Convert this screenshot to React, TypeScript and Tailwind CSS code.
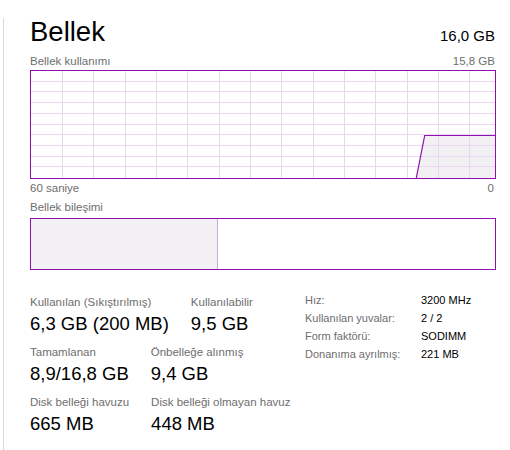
import React from "react";

const purple = "#8b12ae";

const stats = [
  [
    { label: "Kullanılan (Sıkıştırılmış)", value: "6,3 GB (200 MB)" },
    { label: "Kullanılabilir", value: "9,5 GB" },
  ],
  [
    { label: "Tamamlanan", value: "8,9/16,8 GB" },
    { label: "Önbelleğe alınmış", value: "9,4 GB" },
  ],
  [
    { label: "Disk belleği havuzu", value: "665 MB" },
    { label: "Disk belleği olmayan havuz", value: "448 MB" },
  ],
];

const specs = [
  ["Hız:", "3200 MHz"],
  ["Kullanılan yuvalar:", "2 / 2"],
  ["Form faktörü:", "SODIMM"],
  ["Donanıma ayrılmış:", "221 MB"],
];

function UsageGraph() {
  const w = 464;
  const h = 107;
  const cols = Array.from({ length: 14 }, (_, i) => Math.round(31 + i * 31.33) + 0.5);
  const rows = Array.from({ length: 9 }, (_, i) => Math.round((i + 1) * 10.7) - 0.5);
  return (
    <svg width={w} height={h} className="block">
      <polygon points={`385.3,${h} 393.7,64.5 ${w},64.5 ${w},${h}`} fill="#f3f0f4" />
      {cols.map((x) => (
        <line key={x} x1={x} y1={0} x2={x} y2={h} stroke="#e9d6f1" strokeWidth={1} shapeRendering="crispEdges" />
      ))}
      {rows.map((y) => (
        <line key={y} x1={0} y1={y} x2={w} y2={y} stroke="#e9d6f1" strokeWidth={1} shapeRendering="crispEdges" />
      ))}
      <polyline points={`385.3,${h} 393.7,64.5 ${w},64.5`} fill="none" stroke={purple} strokeWidth={1.2} />
    </svg>
  );
}

export default function App() {
  return (
    <div className="w-[510px] h-[450px] bg-white overflow-hidden text-black" style={{ fontFamily: '"Liberation Sans", Arial, sans-serif' }}>
      <div className="ml-[3px] mt-[18px] h-[432px] border-l border-[#dadada] pl-[26px]">
        <div className="w-[466px] flex items-baseline justify-between">
          <div className="text-[27.5px] leading-[28px]">Bellek</div>
          <div className="text-[15px] leading-[20px] pr-[1px]">16,0 GB</div>
        </div>

        <div className="w-[466px] mt-[8px] flex justify-between text-[11.5px] leading-[14px] text-[#6e6e6e]">
          <span>Bellek kullanımı</span>
          <span className="pr-[1px]">15,8 GB</span>
        </div>
        <div className="mt-[2px] w-[466px] h-[109px] border border-[#8b12ae]">
          <UsageGraph />
        </div>
        <div className="w-[466px] mt-[2px] flex justify-between text-[11.5px] leading-[14px] text-[#6e6e6e]">
          <span>60 saniye</span>
          <span className="pr-[2px]">0</span>
        </div>

        <div className="mt-[5px] text-[11.5px] leading-[14px] text-[#6e6e6e]">Bellek bileşimi</div>
        <div className="mt-[4px] w-[466px] h-[52px] border border-[#8b12ae] flex">
          <div className="w-[187px] h-full bg-[#f3f0f4] border-r border-[#c9a9d6]" />
        </div>

        <div className="mt-[25px] flex">
          <div className="w-[275px] flex flex-col gap-[10px]">
            {stats.map((row, i) => (
              <div key={i} className="flex gap-[22px]">
                {row.map((s) => (
                  <div key={s.label} className="flex flex-col">
                    <span className="text-[11.5px] leading-[14px] text-[#6e6e6e] whitespace-nowrap">{s.label}</span>
                    <span className="mt-[4px] text-[18.5px] leading-[22px] whitespace-nowrap">{s.value}</span>
                  </div>
                ))}
              </div>
            ))}
          </div>
          <div className="-mt-[4px] flex flex-col text-[11px] leading-[18px]">
            {specs.map(([k, v]) => (
              <div key={k} className="flex">
                <span className="w-[116px] text-[#6e6e6e] whitespace-nowrap">{k}</span>
                <span className="whitespace-nowrap">{v}</span>
              </div>
            ))}
          </div>
        </div>
      </div>
    </div>
  );
}
